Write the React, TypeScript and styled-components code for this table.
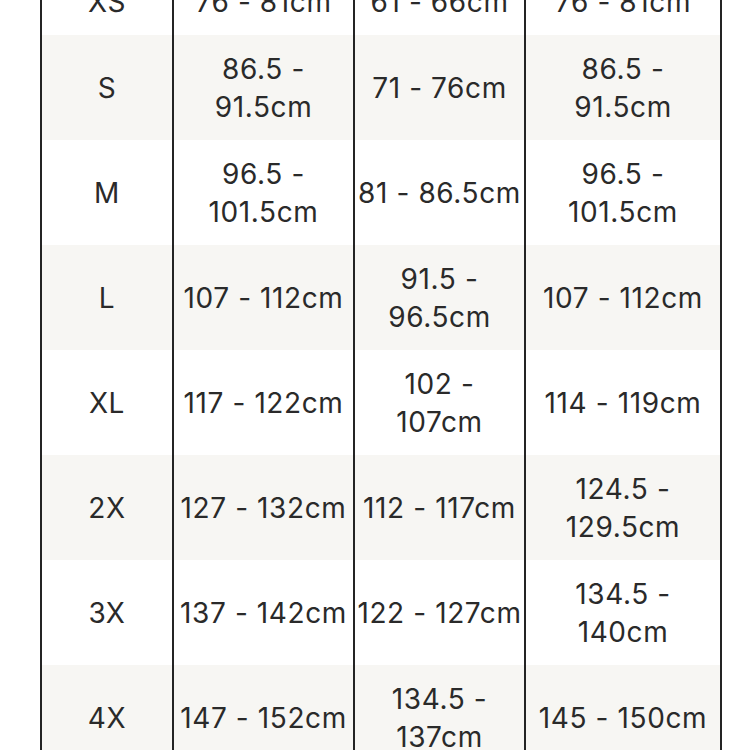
import React from "react";
import styled, { createGlobalStyle } from "styled-components";

const Global = createGlobalStyle`
  html, body { margin: 0; padding: 0; background: #ffffff; }
  body { width: 750px; height: 750px; overflow: hidden; }
`;

const Page = styled.div`
  width: 750px;
  height: 750px;
  overflow: hidden;
  background: #ffffff;
`;

const Table = styled.div`
  display: grid;
  grid-template-columns: 132px 181px 171px 198px;
  margin-top: -32px;
  margin-left: 40px;
  width: max-content;
  font-family: Inter, "Liberation Sans", sans-serif;
  font-size: 28px;
  letter-spacing: 0.6px;
  line-height: 38px;
  color: #2a2a2a;
`;

const Row = styled.div<{ $shaded: boolean }>`
  display: contents;
  & > div {
    background: ${(p) => (p.$shaded ? "#f7f6f3" : "#ffffff")};
  }
`;

const Cell = styled.div<{ $last?: boolean }>`
  padding: 14.5px 0;
  display: flex;
  align-items: center;
  justify-content: center;
  text-align: center;
  white-space: pre-line;
  border-left: 2px solid #242424;
  border-right: ${(p) => (p.$last ? "2px solid #242424" : "none")};
  box-sizing: border-box;
`;

const rows: [string, string, string, string][] = [
  ["XS", "76 - 81cm", "61 - 66cm", "76 - 81cm"],
  ["S", "86.5 -\n91.5cm", "71 - 76cm", "86.5 -\n91.5cm"],
  ["M", "96.5 -\n101.5cm", "81 - 86.5cm", "96.5 -\n101.5cm"],
  ["L", "107 - 112cm", "91.5 -\n96.5cm", "107 - 112cm"],
  ["XL", "117 - 122cm", "102 -\n107cm", "114 - 119cm"],
  ["2X", "127 - 132cm", "112 - 117cm", "124.5 -\n129.5cm"],
  ["3X", "137 - 142cm", "122 - 127cm", "134.5 -\n140cm"],
  ["4X", "147 - 152cm", "134.5 -\n137cm", "145 - 150cm"],
];

export default function App() {
  return (
    <Page>
      <Global />
      <Table>
        {rows.map((r, i) => (
          <Row key={r[0]} $shaded={i % 2 === 1}>
            {r.map((c, j) => (
              <Cell key={j} $last={j === 3}>
                {c}
              </Cell>
            ))}
          </Row>
        ))}
      </Table>
    </Page>
  );
}
